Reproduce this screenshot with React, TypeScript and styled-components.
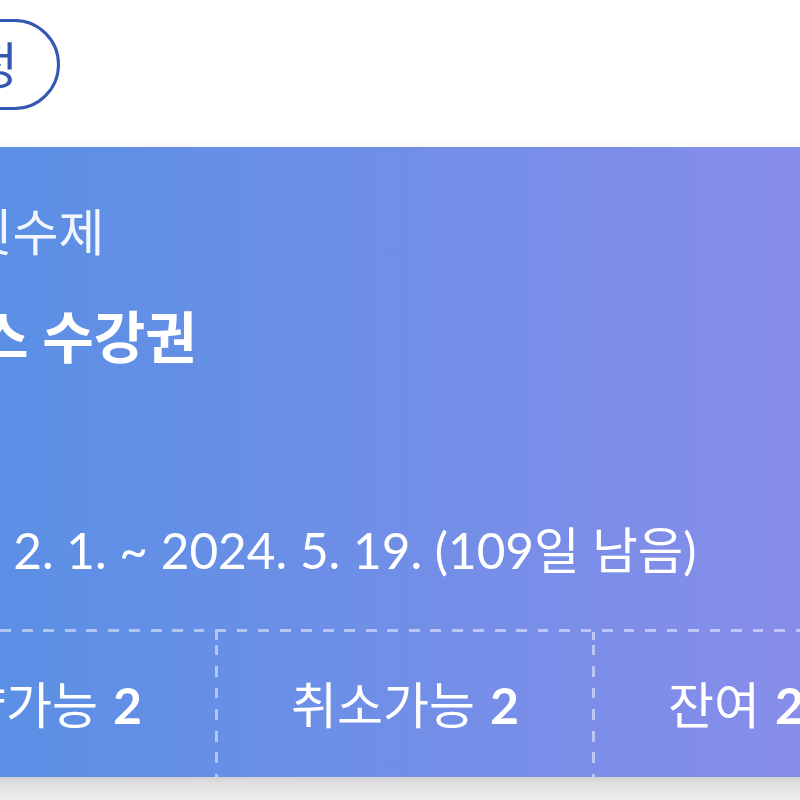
import React from "react";
import styled, { createGlobalStyle } from "styled-components";

const GlobalStyle = createGlobalStyle`
  html, body {
    margin: 0;
    padding: 0;
    background: #ffffff;
    overflow: hidden;
  }
  body {
    font-family: Lato, "Noto Sans CJK KR", "Noto Sans", sans-serif;
    color: #ffffff;
  }
  * { box-sizing: border-box; }
`;

const Page = styled.div`
  width: 1100px;
  height: 800px;
  margin-left: -159px;
  display: flex;
  flex-direction: column;
`;

const Header = styled.header`
  height: 147px;
  padding: 19px 0 0 43px;
  background: #ffffff;
`;

const OutlineButton = styled.button`
  height: 91px;
  padding: 0 39px;
  border: 3px solid #3557b2;
  border-radius: 46px;
  background: #ffffff;
  color: #3557b2;
  font-family: Lato, "Noto Sans CJK KR", sans-serif;
  font-size: 50px;
  line-height: 1.2;
  font-weight: 400;
`;

const Card = styled.section`
  width: fit-content;
  display: flex;
  flex-direction: column;
  background: linear-gradient(90deg, #5290e4 0%, #8b8dea 100%);
  box-shadow: 0 -2px 10px rgba(0, 0, 0, 0.04);
  position: relative;
  z-index: 1;
`;

const Info = styled.div`
  display: flex;
  flex-direction: column;
  padding: 55px 0 48.5px 33px;
`;

const Subtitle = styled.div`
  font-size: 50px;
  line-height: 1.2;
  font-weight: 400;
  color: rgba(255, 255, 255, 0.92);
  white-space: nowrap;
`;

const Title = styled.h1`
  margin: 41px 0 0;
  font-size: 56px;
  line-height: 1.2;
  font-weight: 700;
  color: #ffffff;
  white-space: nowrap;
`;

const Period = styled.div`
  margin-top: 151px;
  font-size: 49.5px;
  line-height: 1.2;
  font-weight: 400;
  color: #ffffff;
  white-space: nowrap;
`;

const StatRow = styled.div`
  display: flex;
  height: 148px;
  background-image: repeating-linear-gradient(
    90deg,
    rgba(255, 255, 255, 0.5) 0 10.5px,
    transparent 10.5px 21.5px
  );
  background-size: 100% 3px;
  background-repeat: no-repeat;
  background-position: 8.5px 0;
  padding-top: 3px;
`;

const StatCell = styled.div`
  display: flex;
  align-items: center;
  justify-content: center;
  padding: 0 73px;
  font-size: 50px;
  line-height: 1.2;
  white-space: nowrap;
`;

const StatDivider = styled.div`
  width: 3px;
  align-self: stretch;
  background-image: repeating-linear-gradient(
    180deg,
    rgba(255, 255, 255, 0.5) 0 10.5px,
    transparent 10.5px 21.5px
  );
  background-position: 0 13px;
`;

const StatValue = styled.b`
  font-weight: 700;
  margin-left: 0.3em;
`;

const Bottom = styled.div`
  flex: 1;
  background: linear-gradient(180deg, #d4d4d4 0px, #e2e2e2 8px, #ececec 22px);
`;

const stats = [
  { label: "예약가능", value: 2 },
  { label: "취소가능", value: 2 },
  { label: "잔여", value: 2 },
];

export default function App() {
  return (
    <>
      <GlobalStyle />
      <Page>
        <Header>
          <OutlineButton>수정</OutlineButton>
        </Header>
        <Card>
          <Info>
            <Subtitle>1:N 횟수제</Subtitle>
            <Title>클래스 수강권</Title>
            <Period>2024. 2. 1. ~ 2024. 5. 19. (109일 남음)</Period>
          </Info>
          <StatRow>
            {stats.map((s, i) => (
              <React.Fragment key={s.label}>
                {i > 0 && <StatDivider />}
                <StatCell>
                  {s.label}
                  <StatValue>{s.value}</StatValue>
                </StatCell>
              </React.Fragment>
            ))}
          </StatRow>
        </Card>
        <Bottom />
      </Page>
    </>
  );
}
